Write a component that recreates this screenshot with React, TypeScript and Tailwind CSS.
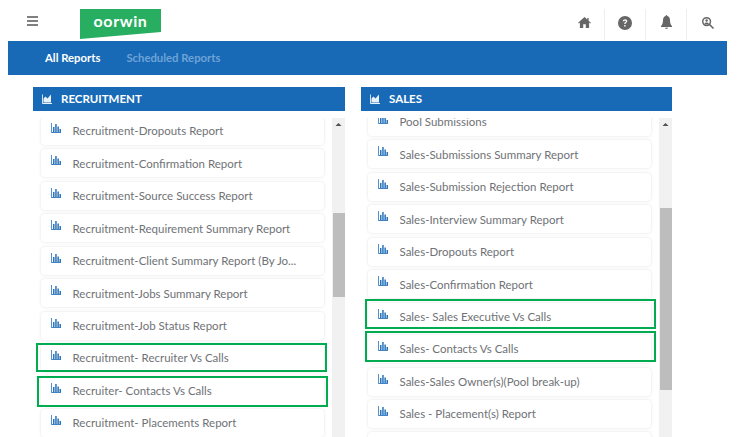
const leftItems = [
  "Recruitment-Dropouts Report",
  "Recruitment-Confirmation Report",
  "Recruitment-Source Success Report",
  "Recruitment-Requirement Summary Report",
  "Recruitment-Client Summary Report (By Jo...",
  "Recruitment-Jobs Summary Report",
  "Recruitment-Job Status Report",
  "Recruitment- Recruiter Vs Calls",
  "Recruiter- Contacts Vs Calls",
  "Recruitment- Placements Report",
];
const rightItems = [
  "Pool Submissions",
  "Sales-Submissions Summary Report",
  "Sales-Submission Rejection Report",
  "Sales-Interview Summary Report",
  "Sales-Dropouts Report",
  "Sales-Confirmation Report",
  "Sales- Sales Executive Vs Calls",
  "Sales- Contacts Vs Calls",
  "Sales-Sales Owner(s)(Pool break-up)",
  "Sales - Placement(s) Report",
  "",
];
const leftMarked: Record<number, string> = {
  7: "-left-[5px] -right-[3px] -top-[1px] bottom-0",
  8: "-left-[4px] -right-[4px] -top-[1px] -bottom-[2px]",
};
const rightMarked: Record<number, string> = {
  6: "-left-[3px] -right-[5px] -top-[4px] bottom-[2px]",
  7: "-left-[3px] -right-[5px] -top-[4px] bottom-[1.500px]",
};

function BarIcon() {
  return (
    <svg width="10" height="10" viewBox="0 0 10 10" className="shrink-0">
      <path d="M0.4 0v9.500H10" fill="none" stroke="#2a74bb" strokeWidth="0.9" />
      <rect x="2" y="4" width="1.500" height="5" fill="#2a74bb" />
      <rect x="4.200" y="1" width="1.500" height="8" fill="#2a74bb" />
      <rect x="6.400" y="3.500" width="1.500" height="5.500" fill="#2a74bb" />
      <rect x="8.500" y="6" width="1.500" height="3" fill="#2a74bb" />
    </svg>
  );
}

function AreaIcon() {
  return (
    <svg width="10" height="10" viewBox="0 0 10 10" className="shrink-0">
      <path d="M0.400 0.500v9h9.600" fill="none" stroke="#fff" strokeWidth="0.900" />
      <path d="M1.500 8.500V4.500l2-2 2 2 3.500-4v8z" fill="#fff" fillOpacity="0.900" />
    </svg>
  );
}

function Panel({
  title,
  items,
  marked,
  listClass,
  thumbClass,
  width,
}: {
  title: string;
  items: string[];
  marked: Record<number, string>;
  listClass: string;
  thumbClass: string;
  width: string;
}) {
  return (
    <section className={`${width} flex flex-col shrink-0`}>
      <header className="h-[24px] bg-[#186ab6] text-white flex items-center pl-[9px] gap-[9px] text-[11.500px] font-bold">
        <AreaIcon />
        <span>{title}</span>
      </header>
      <div className="flex h-[326px] mt-[7px] overflow-hidden">
        <div className="flex-1 min-w-0 overflow-hidden">
          <ul className={`flex flex-col gap-[4.450px] w-[283px] pb-[10px] ${listClass}`}>
            {items.map((t, i) => (
              <li
                key={i}
                className="relative h-[28px] shrink-0 bg-white rounded-[4px] shadow-[0_0_3px_rgba(0,0,0,0.12)] flex items-center pl-[10px] gap-[11.500px] text-[11.500px] text-[#6f7276]"
              >
                <span className="-mt-[6px]">
                  <BarIcon />
                </span>
                <span className="whitespace-nowrap">{t}</span>
                {marked[i] && (
                  <span className={`absolute border-2 border-[#00ac4f] ${marked[i]}`} />
                )}
              </li>
            ))}
          </ul>
        </div>
        <div className="w-[13px] bg-[#f1f1f1] relative shrink-0">
          <svg width="13" height="13" viewBox="0 0 13 13" className="absolute top-0 left-0">
            <path d="M3.500 8l3-3 3 3z" fill="#505050" />
          </svg>
          <div className={`absolute left-[1px] w-[11.500px] bg-[#bdbdbd] ${thumbClass}`} />
        </div>
      </div>
    </section>
  );
}

export default function App() {
  return (
    <div className="w-[737px] h-[437px] bg-white overflow-hidden font-['Lato','Liberation_Sans',sans-serif]">
      <div className="h-[40px] flex items-start">
        <div className="w-[80px] pl-[27px] pt-[16px]">
          <div className="w-[11px] flex flex-col gap-[2px]">
            <div className="h-[2px] bg-[#808080]" />
            <div className="h-[2px] bg-[#808080]" />
            <div className="h-[2px] bg-[#808080]" />
          </div>
        </div>
        <div className="relative w-[81px] h-[30px] mt-[9px] flex items-center justify-center">
          <svg width="81" height="30" viewBox="0 0 81 30" className="absolute inset-0">
            <path d="M0 0H81V23L0 30z" fill="#27ae60" />
          </svg>
          <span className="relative text-white text-[16px] font-bold tracking-[0.600px] -mt-[6px] leading-none">oorwin</span>
        </div>
        <div className="ml-auto mr-[9px] flex h-[31px] mt-[9px]">
          <div className="w-[41px] flex items-start justify-center pt-[8px] border-r border-[#eeeeee]">
            <svg width="13" height="11" viewBox="0 0 14 12"><path d="M7 0L0 6.300l.8.800L2 6v6h3.600V8h2.800v4H12V6l1.200 1.100.8-.8L11.500 4V1H10v1.600z" fill="#666" /></svg>
          </div>
          <div className="w-[41px] flex items-start justify-center pt-[7px] border-r border-[#eeeeee]">
            <svg width="14" height="14" viewBox="0 0 14 14">
              <circle cx="7" cy="7" r="7" fill="#666" />
              <path d="M4.800 5.200C4.900 3.900 5.800 3.200 7.100 3.200c1.300 0 2.200.8 2.200 1.900 0 1.700-1.800 1.600-1.800 3H6.200c0-2 1.700-2 1.700-2.900 0-.5-.3-.8-.8-.8-.6 0-.9.3-1 .9z" fill="#fff" />
              <rect x="6.200" y="9" width="1.400" height="1.500" fill="#fff" />
            </svg>
          </div>
          <div className="w-[41px] flex items-start justify-center pt-[6px] border-r border-[#eeeeee]">
            <svg width="11" height="14" viewBox="0 0 11 14"><path d="M5.500 0C6 0 6.300.4 6.300.9 8.200 1.300 9 3 9 5c0 3 .6 4.600 2 6v1H0v-1c1.400-1.400 2-3 2-6 0-2 .8-3.700 2.700-4.100C4.700.4 5 0 5.500 0zM4 12.800h3c0 .7-.7 1.200-1.500 1.200S4 13.500 4 12.800z" fill="#666" /></svg>
          </div>
          <div className="w-[41px] flex items-start justify-center pt-[8px]">
            <svg width="12" height="12" viewBox="0 0 13 13">
              <circle cx="5" cy="5" r="4.200" fill="none" stroke="#666" strokeWidth="1.600" />
              <circle cx="5" cy="3.800" r="1.300" fill="#666" />
              <path d="M2.500 7.500c.5-1.200 1.500-1.600 2.500-1.600s2 .4 2.500 1.600c-1.400 1-3.600 1-5 0z" fill="#666" />
              <path d="M8 8l4.500 4.500" stroke="#666" strokeWidth="1.600" />
            </svg>
          </div>
        </div>
      </div>
      <nav className="mt-[1px] ml-[8px] w-[719px] h-[34px] bg-[#186ab6] flex items-center pl-[37px] gap-[26px] text-[11.300px] font-bold">
        <span className="text-white">All Reports</span>
        <span className="text-[#6ea3d6]">Scheduled Reports</span>
      </nav>
      <main className="flex gap-[16px] ml-[33px] mt-[12px]">
        <Panel title="RECRUITMENT" items={leftItems} marked={leftMarked} listClass="ml-[8px] -mt-[1px]" thumbClass="top-[95px] h-[84px]" width="w-[312px]" />
        <Panel title="SALES" items={rightItems} marked={rightMarked} listClass="ml-[7px] -mt-[10px]" thumbClass="top-[90px] h-[182px]" width="w-[311px]" />
      </main>
    </div>
  );
}
